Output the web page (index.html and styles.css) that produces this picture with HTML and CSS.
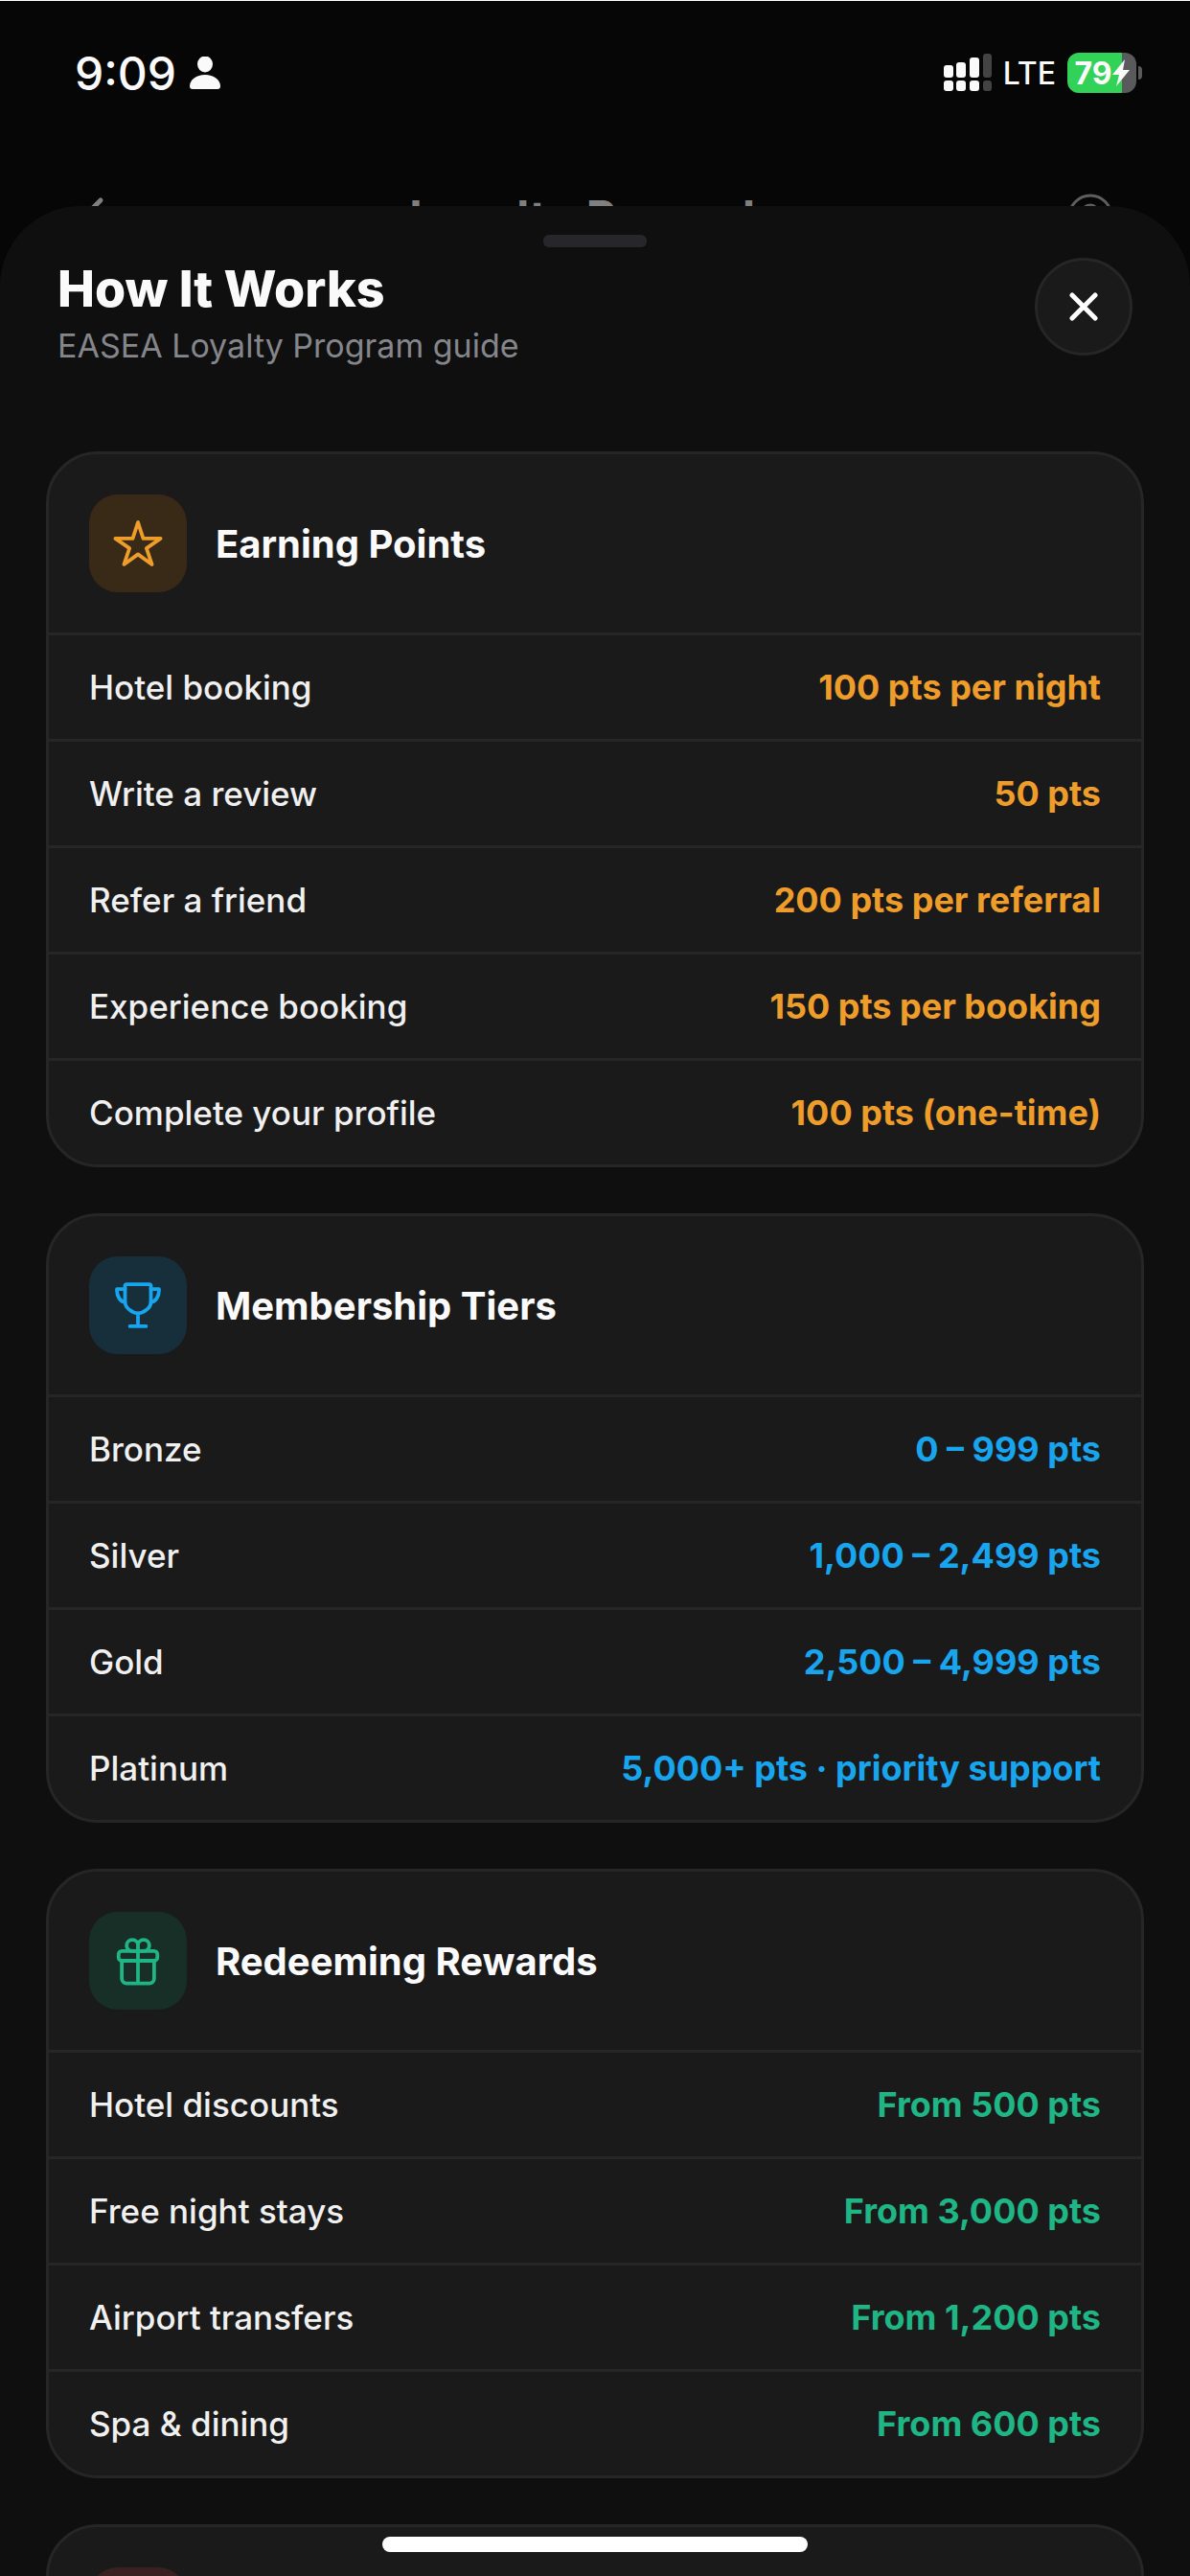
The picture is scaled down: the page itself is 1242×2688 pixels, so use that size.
FILE: index.html
```html
<!DOCTYPE html>
<html lang="en">
<head>
    <meta charset="UTF-8">
    <meta name="viewport" content="width=device-width, initial-scale=1.0">
    <title>How It Works</title>
    <link rel="stylesheet" href="styles.css">
</head>
<body>

<!-- Status bar -->
<div class="status-bar">
    <div class="status-left">
        <span class="time">9:09</span>
        <svg class="person" viewBox="0 0 32 34" fill="currentColor">
            <ellipse cx="16" cy="8" rx="8" ry="8.5"/>
            <path d="M0 31c0-7 7-12 16-12s16 5 16 12c0 2-1 3-3 3H3c-2 0-3-1-3-3z"/>
        </svg>
    </div>
    <div class="status-right">
        <svg class="signal" viewBox="0 0 50 40" fill="currentColor">
            <rect x="0" y="12" width="10" height="13" rx="3"/>
            <rect x="13" y="9" width="10" height="16" rx="3"/>
            <rect x="27" y="4" width="10" height="21" rx="3"/>
            <rect x="0" y="28" width="10" height="11" rx="3"/>
            <rect x="13" y="28" width="10" height="11" rx="3"/>
            <rect x="27" y="28" width="10" height="11" rx="3"/>
            <rect x="41" y="0" width="9" height="25" rx="3" opacity=".25"/>
            <rect x="41" y="28" width="9" height="11" rx="3" opacity=".25"/>
        </svg>
        <span class="network">LTE</span>
        <div class="battery">
            <span>79</span>
            <svg class="bolt" viewBox="0 0 18 28" fill="currentColor">
                <path d="M13 0 0 16h7L4 28 18 11h-7z"/>
            </svg>
        </div>
        <div class="battery-cap"></div>
    </div>
</div>

<!-- Page behind the sheet -->
<div class="page-header">
    <svg class="page-icon" viewBox="0 0 48 48" fill="none" stroke="currentColor" stroke-width="5" stroke-linecap="round" stroke-linejoin="round">
        <path d="M25 7 8 24l17 17"/>
    </svg>
    <div class="page-title">Loyalty Rewards</div>
    <svg class="page-icon help" viewBox="0 0 48 48" fill="none" stroke="currentColor" stroke-width="3" stroke-linecap="round">
        <circle cx="24" cy="24" r="22"/>
        <path d="M17 18c0-4 3-6 7-6s7 3 7 6c0 5-7 5-7 10"/>
        <circle cx="24" cy="35" r="1"/>
    </svg>
</div>

<!-- Bottom sheet -->
<main class="sheet">
    <div class="handle"></div>
    <header class="sheet-header">
        <div>
            <h1>How It Works</h1>
            <p>EASEA Loyalty Program guide</p>
        </div>
        <button class="close" type="button" aria-label="Close">
            <svg viewBox="0 0 30 30" fill="none" stroke="currentColor" stroke-width="5" stroke-linecap="round">
                <path d="M3 3l24 24M27 3 3 27"/>
            </svg>
        </button>
    </header>

    <div class="cards">
        <section class="card amber">
            <div class="card-header">
                <div class="tile">
                    <svg viewBox="0 0 512 512">
                        <path d="M480 208H308L256 48l-52 160H32l140 96-54 160 138-100 138 100-54-160z"/>
                    </svg>
                </div>
                <h2>Earning Points</h2>
            </div>
            <dl>
                <div class="row"><dt>Hotel booking</dt><dd>100 pts per night</dd></div>
                <div class="row"><dt>Write a review</dt><dd>50 pts</dd></div>
                <div class="row"><dt>Refer a friend</dt><dd>200 pts per referral</dd></div>
                <div class="row"><dt>Experience booking</dt><dd>150 pts per booking</dd></div>
                <div class="row"><dt>Complete your profile</dt><dd>100 pts (one-time)</dd></div>
            </dl>
        </section>

        <section class="card blue">
            <div class="card-header">
                <div class="tile">
                    <svg viewBox="0 0 512 512">
                        <path d="M176 464h160M256 464V336M384 224c0-50.64-.08-134.63-.12-160a16 16 0 0 0-16-16l-223.79.26a16 16 0 0 0-16 15.95c0 30.58-.13 129.17-.13 159.79 0 64.28 83 112 128 112S384 288.280 384 224z"/>
                        <path d="M128 96H48v16c0 55.220 33.550 112 80 112M384 96h80v16c0 55.220-33.550 112-80 112"/>
                    </svg>
                </div>
                <h2>Membership Tiers</h2>
            </div>
            <dl>
                <div class="row"><dt>Bronze</dt><dd>0 – 999 pts</dd></div>
                <div class="row"><dt>Silver</dt><dd>1,000 – 2,499 pts</dd></div>
                <div class="row"><dt>Gold</dt><dd>2,500 – 4,999 pts</dd></div>
                <div class="row"><dt>Platinum</dt><dd>5,000+ pts · priority support</dd></div>
            </dl>
        </section>

        <section class="card green">
            <div class="card-header">
                <div class="tile">
                    <svg viewBox="0 0 512 512">
                        <path d="M256 104v56h56a56 56 0 1 0-56-56zM256 104v56h-56a56 56 0 1 1 56-56z"/>
                        <rect x="64" y="160" width="384" height="96" rx="32"/>
                        <path d="M416 256v176a48 48 0 0 1-48 48H144a48 48 0 0 1-48-48V256M256 160v320"/>
                    </svg>
                </div>
                <h2>Redeeming Rewards</h2>
            </div>
            <dl>
                <div class="row"><dt>Hotel discounts</dt><dd>From 500 pts</dd></div>
                <div class="row"><dt>Free night stays</dt><dd>From 3,000 pts</dd></div>
                <div class="row"><dt>Airport transfers</dt><dd>From 1,200 pts</dd></div>
                <div class="row"><dt>Spa &amp; dining</dt><dd>From 600 pts</dd></div>
            </dl>
        </section>

        <section class="card red">
            <div class="card-header">
                <div class="tile"></div>
            </div>
        </section>
    </div>
</main>

<div class="home-indicator"></div>

</body>
</html>
```
FILE: styles.css
```css
* {
    box-sizing: border-box;
    margin: 0;
    padding: 0;
}
body {
    font-family: Inter, "Liberation Sans", sans-serif;
    background-color: #060606;
    color: #fafafa;
    height: 100vh;
    display: flex;
    flex-direction: column;
    overflow: hidden;
    border-top: 1px solid #ffffff;
}
/* Status bar */
.status-bar {
    display: flex;
    justify-content: space-between;
    align-items: center;
    height: 150px;
    padding: 0 50px 0 78px;
    flex-shrink: 0;
}
.status-left,
.status-right {
    display: flex;
    align-items: center;
}
.time {
    font-size: 48px;
    font-weight: 500;
    margin-right: 14px;
}
.person {
    width: 32px;
    height: 34px;
}
.signal {
    width: 50px;
    height: 40px;
    margin-right: 12px;
}
.network {
    font-size: 32px;
    font-weight: 500;
    margin-right: 12px;
}
.battery {
    display: flex;
    align-items: center;
    justify-content: center;
    width: 72px;
    height: 42px;
    border-radius: 12px;
    background: linear-gradient(to right, #32d158 79%, #5a5a5c 79%);
    font-size: 32px;
    font-weight: 700;
}
.bolt {
    width: 18px;
    height: 28px;
}
.battery-cap {
    width: 4px;
    height: 14px;
    margin-left: 2px;
    border-radius: 0 4px 4px 0;
    background-color: #5a5a5c;
}
/* Page behind the sheet */
.page-header {
    display: flex;
    justify-content: space-between;
    align-items: center;
    height: 150px;
    padding: 0 80px;
    color: #808080;
    flex-shrink: 0;
}
.page-icon {
    width: 48px;
    height: 48px;
}
.help {
    color: #5e5e60;
}
.page-title {
    font-size: 48px;
    font-weight: 700;
}
/* Bottom sheet */
.sheet {
    position: relative;
    flex: 1;
    min-height: 0;
    margin-top: -86px;
    padding-top: 30px;
    border-radius: 84px 84px 0 0;
    background-color: #0f0f0f;
    overflow: hidden;
}
.handle {
    width: 108px;
    height: 13px;
    margin: 0 auto 11px;
    border-radius: 6px;
    background-color: #27272b;
}
.sheet-header {
    display: flex;
    justify-content: space-between;
    align-items: flex-start;
    padding: 0 60px;
    margin-bottom: 88px;
}
.sheet-header h1 {
    font-size: 52px;
    font-weight: 800;
    line-height: 66px;
}
.sheet-header p {
    margin-top: 4px;
    font-size: 34px;
    line-height: 44px;
    color: #85868c;
}
.close {
    display: flex;
    align-items: center;
    justify-content: center;
    width: 102px;
    height: 102px;
    border: 3px solid #262626;
    border-radius: 50%;
    background-color: #1a1a1a;
    color: #ffffff;
}
.close svg {
    width: 30px;
    height: 30px;
}
/* Cards */
.cards {
    display: flex;
    flex-direction: column;
    gap: 48px;
    padding: 0 48px;
}
.card {
    border: 3px solid #262626;
    border-radius: 54px;
    background-color: #1a1a1a;
}
.card-header {
    display: flex;
    align-items: center;
    gap: 30px;
    padding: 42px;
}
.card-header h2 {
    font-size: 40px;
    font-weight: 700;
}
.tile {
    display: flex;
    align-items: center;
    justify-content: center;
    width: 102px;
    height: 102px;
    border-radius: 30px;
}
.tile svg {
    width: 54px;
    height: 54px;
    fill: none;
    stroke: currentColor;
    stroke-width: 36;
    stroke-linecap: round;
    stroke-linejoin: round;
}
.row {
    display: flex;
    justify-content: space-between;
    align-items: center;
    height: 111px;
    padding: 0 42px;
    border-top: 3px solid #262626;
}
.row dt {
    font-size: 35px;
    font-weight: 500;
    color: #f0f0f0;
}
.row dd {
    font-size: 36px;
    font-weight: 700;
}
/* Colors */
.amber .tile,
.amber dd {
    color: #ee9d2b;
}
.amber .tile {
    background-color: #392a17;
}
.blue .tile,
.blue dd {
    color: #18a5ee;
}
.blue .tile {
    background-color: #172f3a;
}
.green .tile,
.green dd {
    color: #1fb585;
}
.green .tile {
    background-color: #182f28;
}
.red .tile {
    background-color: #3a2020;
}
.home-indicator {
    position: fixed;
    bottom: 25px;
    left: 50%;
    width: 444px;
    height: 16px;
    margin-left: -222px;
    border-radius: 8px;
    background-color: #ffffff;
}
```
